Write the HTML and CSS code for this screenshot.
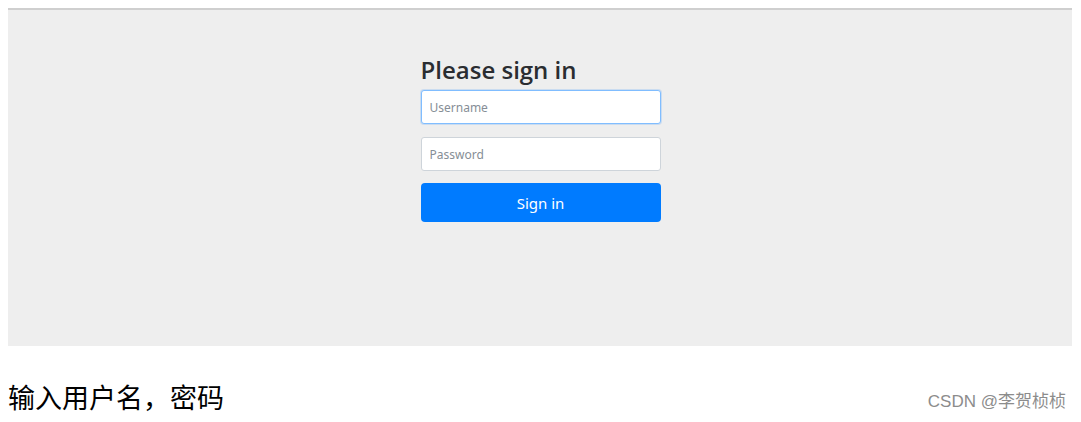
FILE: index.html
```html
<!doctype html>
<html lang="zh-CN">
<head>
  <meta charset="UTF-8" />
  <title>Please sign in</title>
  <link rel="stylesheet" href="styles.css">
</head>
<body>
  <!-- Screenshot of the login page -->
  <div class="shot">
    <form class="form-signin">
      <h2 class="form-signin-heading">Please sign in</h2>
      <input type="text" class="form-control" placeholder="Username" />
      <input type="password" class="form-control" placeholder="Password" />
      <button type="button" class="btn-signin">Sign in</button>
    </form>
  </div>
  <p class="caption">输入用户名，密码</p>
  <div class="watermark">CSDN @李贺桢桢</div>
</body>
</html>
```

FILE: styles.css
```css
body, html {
  margin: 0;
  padding: 0;
  height: 100%;
  overflow: hidden;
  background: #fff;
}
body {
  padding: 8px;
  box-sizing: border-box;
}
/* Gray screenshot panel */
.shot {
  width: 1064px;
  height: 338px;
  background: #eeeeee;
  border-top: 2px solid #cfcfcf;
  box-sizing: border-box;
  display: flex;
  justify-content: center;
  padding-top: 45px;
  padding-left: 1px;
}
.form-signin {
  width: 240px;
  display: flex;
  flex-direction: column;
  font-family: "Noto Sans", "Open Sans", sans-serif;
}
.form-signin-heading {
  margin: 0 0 5px;
  font-family: "Open Sans", "Noto Sans", sans-serif;
  font-size: 24px;
  font-weight: 600;
  color: #2a2d31;
  line-height: 30px;
}
.form-control {
  height: 34px;
  padding: 0 8px;
  border: 1px solid #ced4da;
  border-radius: 3px;
  background: #fff;
  font-family: inherit;
  font-size: 12px;
  box-sizing: border-box;
  margin-bottom: 12px;
  outline: none;
}
.form-control:first-of-type {
  margin-bottom: 13px;
  border-color: #80bdff;
  box-shadow: 0 0 0 1px rgba(0, 123, 255, 0.15);
}
.form-control::placeholder {
  color: #868e96;
}
.btn-signin {
  height: 39px;
  background: #007bff;
  color: #fff;
  border: none;
  border-radius: 4px;
  font-family: inherit;
  font-size: 15px;
  cursor: pointer;
}
.caption {
  margin: 33px 0 0;
  font-family: "Noto Sans CJK SC", sans-serif;
  font-size: 27px;
  line-height: 36px;
  color: #000;
}
.watermark {
  position: absolute;
  right: 15px;
  bottom: 10px;
  font-family: "Liberation Sans", "Noto Sans CJK SC", sans-serif;
  font-size: 17px;
  color: #8c8c8c;
}
```
